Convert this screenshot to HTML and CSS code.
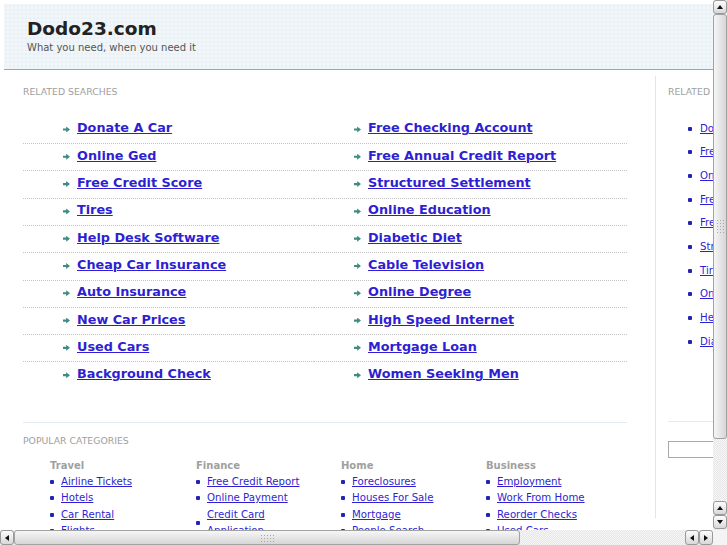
FILE: index.html
```html
<!DOCTYPE html>
<html lang="en">
<head>
  <meta charset="UTF-8">
  <title>Dodo23.com</title>
  <link rel="stylesheet" href="styles.css">
</head>
<body>

  <div class="window">
    <div class="viewport">
      <div class="page">

        <div class="header">
          <h1 class="logo">Dodo23.com</h1>
          <p class="slogan">What you need, when you need it</p>
        </div>

        <div class="content">
          <div class="main">
            <h2 class="label">Related Searches</h2>
            <ul class="searches">
              <li><a href="#">Donate A Car</a></li>
              <li><a href="#">Free Checking Account</a></li>
              <li><a href="#">Online Ged</a></li>
              <li><a href="#">Free Annual Credit Report</a></li>
              <li><a href="#">Free Credit Score</a></li>
              <li><a href="#">Structured Settlement</a></li>
              <li><a href="#">Tires</a></li>
              <li><a href="#">Online Education</a></li>
              <li><a href="#">Help Desk Software</a></li>
              <li><a href="#">Diabetic Diet</a></li>
              <li><a href="#">Cheap Car Insurance</a></li>
              <li><a href="#">Cable Television</a></li>
              <li><a href="#">Auto Insurance</a></li>
              <li><a href="#">Online Degree</a></li>
              <li><a href="#">New Car Prices</a></li>
              <li><a href="#">High Speed Internet</a></li>
              <li><a href="#">Used Cars</a></li>
              <li><a href="#">Mortgage Loan</a></li>
              <li><a href="#">Background Check</a></li>
              <li><a href="#">Women Seeking Men</a></li>
            </ul>

            <div class="popular">
              <h2 class="label">Popular Categories</h2>
              <div class="cats">
                <div class="cat">
                  <h3>Travel</h3>
                  <ul>
                    <li><a href="#">Airline Tickets</a></li>
                    <li><a href="#">Hotels</a></li>
                    <li><a href="#">Car Rental</a></li>
                    <li><a href="#">Flights</a></li>
                  </ul>
                </div>
                <div class="cat">
                  <h3>Finance</h3>
                  <ul>
                    <li><a href="#">Free Credit Report</a></li>
                    <li><a href="#">Online Payment</a></li>
                    <li><a href="#">Credit Card Application</a></li>
                    <li><a href="#">Insurance</a></li>
                  </ul>
                </div>
                <div class="cat">
                  <h3>Home</h3>
                  <ul>
                    <li><a href="#">Foreclosures</a></li>
                    <li><a href="#">Houses For Sale</a></li>
                    <li><a href="#">Mortgage</a></li>
                    <li><a href="#">People Search</a></li>
                  </ul>
                </div>
                <div class="cat">
                  <h3>Business</h3>
                  <ul>
                    <li><a href="#">Employment</a></li>
                    <li><a href="#">Work From Home</a></li>
                    <li><a href="#">Reorder Checks</a></li>
                    <li><a href="#">Used Cars</a></li>
                  </ul>
                </div>
              </div>
            </div>
          </div>

          <div class="side">
            <h2 class="label">Related Searches</h2>
            <ul class="side-list">
              <li><a href="#">Donate A Car</a></li>
              <li><a href="#">Free Checking Account</a></li>
              <li><a href="#">Online Ged</a></li>
              <li><a href="#">Free Annual Credit Report</a></li>
              <li><a href="#">Free Credit Score</a></li>
              <li><a href="#">Structured Settlement</a></li>
              <li><a href="#">Tires</a></li>
              <li><a href="#">Online Education</a></li>
              <li><a href="#">Help Desk Software</a></li>
              <li><a href="#">Diabetic Diet</a></li>
            </ul>
            <div class="search">
              <input type="text" class="search-box">
            </div>
          </div>
        </div>

      </div>
    </div>

    <!-- browser scrollbars -->
    <div class="vbar">
      <span class="sb-btn up"></span>
      <span class="thumb"></span>
      <span class="track"></span>
      <span class="sb-btn up"></span>
      <span class="sb-btn down"></span>
    </div>
    <div class="hbar">
      <span class="sb-btn left"></span>
      <span class="thumb"></span>
      <span class="track"></span>
      <span class="sb-btn left"></span>
      <span class="sb-btn right"></span>
    </div>
    <div class="corner"></div>
  </div>

</body>
</html>
```

FILE: styles.css
```css
* {
  box-sizing: border-box;
}
html, body {
  margin: 0;
  padding: 0;
}
body {
  font-family: "DejaVu Sans", Verdana, sans-serif;
  background: #fff;
}
ul {
  margin: 0;
  padding: 0;
  list-style: none;
}
h1, h2, h3, p {
  margin: 0;
}
a {
  color: #2f1fd2;
}

.window {
  display: grid;
  grid-template-columns: 713px 14px;
  grid-template-rows: 530px 15px;
  width: 727px;
  height: 545px;
  overflow: hidden;
}
.viewport {
  overflow: hidden;
}
.page {
  width: 950px;
  padding: 4px 0 0 4px;
}

/* header */
.header {
  height: 66px;
  padding: 14px 0 0 23px;
  background-color: #eff5f8;
  background-image: radial-gradient(circle, #e6eef1 0.6px, transparent 0.9px);
  background-size: 4px 4px;
  border-bottom: 1px solid #8ea5d9;
}
.logo {
  font-size: 18.5px;
  line-height: 22px;
  font-weight: 700;
  color: #222;
}
.slogan {
  margin-top: 1px;
  font-size: 10px;
  line-height: 14px;
  color: #555;
}

.content {
  display: flex;
  align-items: flex-start;
}
.label {
  font-size: 9.3px;
  line-height: 11px;
  font-weight: normal;
  text-transform: uppercase;
  color: #a0a0a0;
  white-space: nowrap;
}

/* main column */
.main {
  flex: 0 0 651px;
  min-width: 0;
  padding: 15.5px 28px 0 19px;
}
.searches {
  display: grid;
  grid-template-columns: 291px 313px;
  margin-top: 20.3px;
}
.searches li {
  display: flex;
  align-items: center;
  height: 27.3px;
  padding: 3.7px 0 6.6px 40px;
  border-bottom: 1px dotted #c4c4c4;
}
.searches li:nth-last-child(-n+2) {
  border-bottom: 0;
  height: 26.3px;
}
.searches li::before {
  content: '';
  flex: 0 0 7px;
  height: 6px;
  margin: 2px 7px 0 0;
  background-color: #3f8c84;
  clip-path: polygon(0 32%, 45% 32%, 45% 0, 100% 50%, 45% 100%, 45% 68%, 0 68%);
}
.searches a {
  font-size: 12.8px;
  line-height: 16px;
  font-weight: 700;
  white-space: nowrap;
}

.popular {
  margin-top: 33px;
  padding-top: 12.5px;
  border-top: 1px solid #e3eaf4;
}
.cats {
  display: grid;
  grid-template-columns: 146px 145px 145px 140px;
  margin: 12.5px 0 0 27px;
}
.cat h3 {
  margin-bottom: 1px;
  font-size: 10px;
  line-height: 14px;
  font-weight: 700;
  color: #a0a0a0;
}
.cat ul {
  width: 120px;
}
.cat li,
.side-list li {
  display: flex;
  align-items: center;
  font-size: 10.2px;
  line-height: 16.4px;
}
.cat li::before,
.side-list li::before {
  content: '';
  flex: 0 0 4px;
  height: 4px;
  margin-right: 7px;
  border-radius: 1px;
  background-color: #2424b4;
}

/* side column */
.side {
  flex: 0 0 280px;
  margin-top: 6px;
  padding: 9.5px 0 60px 12px;
  border-left: 1px solid #dde5f1;
}
.side-list {
  margin-top: 20.5px;
}
.side-list li {
  height: 23.67px;
  padding-left: 20px;
  line-height: 14px;
  white-space: nowrap;
}
.side-list li::before {
  margin-right: 8px;
}
.search {
  margin-top: 67px;
  padding-top: 19px;
  border-top: 1px solid #e3eaf4;
}
.search-box {
  display: block;
  width: 200px;
  height: 17px;
  margin: 0;
  border: 1px solid #a9a9a9;
  background: #fff;
}

/* fake browser scrollbars */
.vbar,
.hbar {
  display: flex;
  background-color: #f1f1f1;
  background-image: repeating-conic-gradient(#e6e6e6 0 25%, #f7f7f7 0 50%);
  background-size: 2px 2px;
}
.vbar {
  flex-direction: column;
  padding-bottom: 1px;
}
.corner {
  background: #f4f4f4;
}
.track {
  flex: 1;
}
.sb-btn {
  display: flex;
  align-items: center;
  justify-content: center;
  flex: 0 0 14px;
  width: 14px;
  height: 14px;
  border: 1px solid #999;
  border-radius: 3px;
  background: linear-gradient(#fdfdfd, #d8d8d8);
}
.hbar .sb-btn {
  height: 15px;
}
.sb-btn::before {
  content: '';
  width: 0;
  height: 0;
  border: 3.5px solid transparent;
}
.sb-btn.up::before {
  border-top: 0;
  border-bottom: 4px solid #111;
}
.sb-btn.down::before {
  border-bottom: 0;
  border-top: 4px solid #111;
}
.sb-btn.left::before {
  border-left: 0;
  border-right: 4px solid #111;
}
.sb-btn.right::before {
  border-right: 0;
  border-left: 4px solid #111;
}
.thumb {
  display: flex;
  align-items: center;
  justify-content: center;
  border: 1px solid #a2a2a2;
  border-radius: 3px;
}
.vbar .thumb {
  flex: 0 0 425px;
  background: linear-gradient(90deg, #f6f6f6, #d6d6d6);
}
.hbar .thumb {
  flex: 0 0 506px;
  background: linear-gradient(#f6f6f6, #d6d6d6);
}
.thumb::after {
  content: '';
  background-image: radial-gradient(circle, #a8a8a8 0.6px, transparent 0.9px);
  background-size: 3px 3px;
}
.vbar .thumb::after {
  width: 8px;
  height: 15px;
}
.hbar .thumb::after {
  width: 15px;
  height: 8px;
}
```
